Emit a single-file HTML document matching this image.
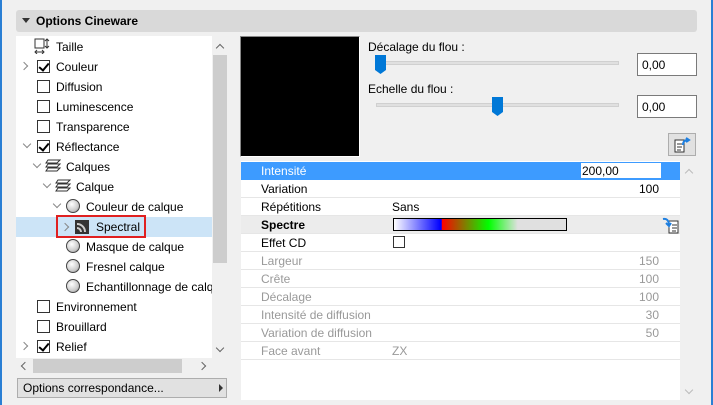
<!DOCTYPE html>
<html><head><meta charset="utf-8"><style>
*{margin:0;padding:0;box-sizing:border-box}
body{width:713px;height:405px;background:#f0f0f0;position:relative;overflow:hidden;font-family:"Liberation Sans",sans-serif;font-size:12px;color:#000}
.a{position:absolute}
.t{position:absolute;white-space:nowrap;line-height:22px}
.cb{position:absolute;width:13px;height:13px;border:1px solid #333;background:#fff}
.cb.on::after{content:"";position:absolute;left:3px;top:0px;width:4px;height:8px;border:solid #000;border-width:0 2px 2px 0;transform:rotate(40deg)}
.chev{position:absolute;width:6px;height:6px;border:solid #888;border-width:0 1.5px 1.5px 0}
.down{transform:rotate(45deg)}
.right{transform:rotate(-45deg)}
.ball{position:absolute;width:14px;height:14px;border-radius:50%;border:1px solid #444;background:radial-gradient(circle at 40% 35%,#fff,#ccc 60%,#888)}
.row{position:absolute;left:241px;width:439px;height:18px;border-bottom:1px solid #e6e6e6;background:#fff;line-height:19px}
.row span{position:absolute}
.g{color:#999}
</style></head><body>
<div class="a" style="left:0;top:0;width:2px;height:405px;background:#2a7fd4"></div>
<div class="a" style="left:711px;top:0;width:2px;height:405px;background:#2a7fd4"></div>
<div class="a" style="left:16px;top:10px;width:681px;height:22px;background:#d9d9d9;border-radius:3px"></div>
<div class="a" style="left:22px;top:18px;border-left:4px solid transparent;border-right:4px solid transparent;border-top:5px solid #333"></div>
<div class="t" style="left:36px;top:10px;line-height:22px;font-weight:bold">Options Cineware</div>

<!-- tree -->
<div class="a" style="left:16px;top:36px;width:196px;height:322px;background:#fff;overflow:hidden">
 <svg class="a" style="left:18px;top:2px" width="16" height="16"><rect x="1" y="1" width="9" height="9" fill="none" stroke="#333"/><path d="M13 1v9M11 3l2-2 2 2M11 8l2 2 2-2M1 14h9M3 12l-2 2 2 2M8 12l2 2-2 2" stroke="#333" fill="none"/></svg>
 <div class="t" style="left:40px;top:0">Taille</div>
 <div class="chev right" style="left:5px;top:27px"></div><div class="cb on" style="left:21px;top:24px"></div><div class="t" style="left:40px;top:20px">Couleur</div>
 <div class="cb" style="left:21px;top:44px"></div><div class="t" style="left:40px;top:40px">Diffusion</div>
 <div class="cb" style="left:21px;top:64px"></div><div class="t" style="left:40px;top:60px">Luminescence</div>
 <div class="cb" style="left:21px;top:84px"></div><div class="t" style="left:40px;top:80px">Transparence</div>
 <div class="chev down" style="left:8px;top:105px"></div><div class="cb on" style="left:21px;top:104px"></div><div class="t" style="left:40px;top:100px">Réflectance</div>
 <div class="chev down" style="left:18px;top:125px"></div>
 <svg class="a" style="left:29px;top:123px" width="16" height="14"><path d="M3 1h12l-3 3H1zM3 5h12l-3 3H1zM3 9h12l-3 3H1z" fill="none" stroke="#333"/></svg>
 <div class="t" style="left:50px;top:120px">Calques</div>
 <div class="chev down" style="left:28px;top:145px"></div>
 <svg class="a" style="left:39px;top:143px" width="16" height="14"><path d="M3 1h12l-3 3H1zM3 5h12l-3 3H1zM3 9h12l-3 3H1z" fill="none" stroke="#333"/></svg>
 <div class="t" style="left:60px;top:140px">Calque</div>
 <div class="chev down" style="left:38px;top:165px"></div><div class="ball" style="left:50px;top:163px"></div><div class="t" style="left:70px;top:160px">Couleur de calque</div>
 <div class="a" style="left:0;top:181px;width:196px;height:20px;background:#cce4f7"></div>
 <div class="a" style="left:40px;top:179px;width:90px;height:23px;border:2px solid #e02020"></div>
 <div class="chev right" style="left:46px;top:188px"></div>
 <svg class="a" style="left:59px;top:184px" width="14" height="14"><rect width="14" height="14" fill="#333"/><path d="M2 4a8 8 0 0 1 8 8M2 8a4 4 0 0 1 4 4" stroke="#ccc" stroke-width="2" fill="none"/></svg>
 <div class="t" style="left:80px;top:180px">Spectral</div>
 <div class="ball" style="left:50px;top:203px"></div><div class="t" style="left:70px;top:200px">Masque de calque</div>
 <div class="ball" style="left:50px;top:223px"></div><div class="t" style="left:70px;top:220px">Fresnel calque</div>
 <div class="ball" style="left:50px;top:243px"></div><div class="t" style="left:70px;top:240px">Echantillonnage de calque</div>
 <div class="cb" style="left:21px;top:264px"></div><div class="t" style="left:40px;top:260px">Environnement</div>
 <div class="cb" style="left:21px;top:284px"></div><div class="t" style="left:40px;top:280px">Brouillard</div>
 <div class="chev right" style="left:5px;top:307px"></div><div class="cb on" style="left:21px;top:304px"></div><div class="t" style="left:40px;top:300px">Relief</div>
</div>
<div class="a" style="left:212px;top:36px;width:16px;height:322px;background:#f0f0f0"></div>
<div class="a" style="left:213px;top:55px;width:14px;height:208px;background:#cdcdcd"></div>
<div class="chev" style="left:217px;top:45px;transform:rotate(-135deg);border-color:#666"></div>
<div class="chev down" style="left:217px;top:345px;border-color:#666"></div>
<div class="a" style="left:16px;top:358px;width:212px;height:16px;background:#f0f0f0"></div>
<div class="a" style="left:33px;top:359px;width:149px;height:14px;background:#cdcdcd"></div>
<div class="chev" style="left:22px;top:363px;transform:rotate(135deg);border-color:#666"></div>
<div class="chev right" style="left:199px;top:363px;border-color:#666"></div>
<div class="a" style="left:17px;top:378px;width:210px;height:20px;background:#e1e1e1;border:1px solid #adadad"></div>
<div class="t" style="left:23px;top:378px;line-height:20px">Options correspondance...</div>
<div class="a" style="left:219px;top:384px;border-top:4px solid transparent;border-bottom:4px solid transparent;border-left:4px solid #333"></div>

<!-- right -->
<div class="a" style="left:240px;top:36px;width:120px;height:121px;background:#000;border:1px solid #888;border-right-color:#fff;border-bottom-color:#fff"></div>
<div class="t" style="left:368px;top:36px">Décalage du flou :</div>
<div class="a" style="left:376px;top:61px;width:243px;height:4px;background:#e0e0e0;border:1px solid #d0d0d0"></div>
<svg class="a" style="left:375px;top:55px" width="12" height="20"><path d="M0 0h11v15l-5.5 4L0 15z" fill="#0078d7"/></svg>
<div class="a" style="left:637px;top:53px;width:60px;height:23px;background:#fff;border:1px solid #7a7a7a"></div>
<div class="t" style="left:642px;top:55px;line-height:20px">0,00</div>
<div class="t" style="left:368px;top:78px">Echelle du flou :</div>
<div class="a" style="left:376px;top:103px;width:243px;height:4px;background:#e0e0e0;border:1px solid #d0d0d0"></div>
<svg class="a" style="left:492px;top:97px" width="12" height="20"><path d="M0 0h11v15l-5.5 4L0 15z" fill="#0078d7"/></svg>
<div class="a" style="left:637px;top:95px;width:60px;height:23px;background:#fff;border:1px solid #7a7a7a"></div>
<div class="t" style="left:642px;top:97px;line-height:20px">0,00</div>
<div class="a" style="left:668px;top:133px;width:28px;height:23px;background:#e1e1e1;border:1px solid #adadad"></div>
<svg class="a" style="left:673px;top:136px" width="20" height="18"><path d="M2 4h9v12H2z" fill="#fff" stroke="#333"/><path d="M4 8h5M4 11h5M4 14h4" stroke="#333"/><path d="M10 9q0-5 5-5M13 2l3 2-3 2" stroke="#1e7fe0" stroke-width="2" fill="none"/></svg>

<div class="a" style="left:241px;top:161px;width:439px;height:239px;background:#fff"></div>
<div class="row" style="top:162px;background:#3d9bff;color:#fff;border:none"><span style="left:20px">Intensité</span></div>
<div class="a" style="left:581px;top:163px;width:80px;height:15px;background:#fff;line-height:17px;padding-left:1px">200,00</div>
<div class="row" style="top:180px"><span style="left:20px">Variation</span><span style="right:21px">100</span></div>
<div class="row" style="top:198px"><span style="left:20px">Répétitions</span><span style="left:151px">Sans</span></div>
<div class="row" style="top:216px;background:#ececec"><span style="left:20px;font-weight:bold">Spectre</span></div>
<div class="a" style="left:393px;top:218px;width:174px;height:13px;border:1px solid #000;background:linear-gradient(90deg,#fff 0%,#0000ff 27%,#0000ff 27.5%,#ff0000 28%,#00ff00 55%,#e0e0e0 72%,#e0e0e0 100%)"></div>
<svg class="a" style="left:662px;top:216px" width="18" height="18"><path d="M7 5h9v12H7z" fill="#fff" stroke="#333"/><path d="M10 9h5M10 12h5M10 15h4" stroke="#333"/><path d="M1 3q5-1 6 5M4 7l3 3 2-3" stroke="#1e7fe0" stroke-width="2" fill="none"/></svg>
<div class="row" style="top:234px"><span style="left:20px">Effet CD</span></div>
<div class="cb" style="left:393px;top:236px;width:12px;height:12px"></div>
<div class="row g" style="top:252px"><span style="left:20px">Largeur</span><span style="right:21px">150</span></div>
<div class="row g" style="top:270px"><span style="left:20px">Crête</span><span style="right:21px">100</span></div>
<div class="row g" style="top:288px"><span style="left:20px">Décalage</span><span style="right:21px">100</span></div>
<div class="row g" style="top:306px"><span style="left:20px">Intensité de diffusion</span><span style="right:21px">30</span></div>
<div class="row g" style="top:324px"><span style="left:20px">Variation de diffusion</span><span style="right:21px">50</span></div>
<div class="row g" style="top:342px"><span style="left:20px">Face avant</span><span style="left:151px">ZX</span></div>
<div class="a" style="left:680px;top:161px;width:17px;height:239px;background:#f0f0f0"></div>
<div class="chev" style="left:686px;top:170px;transform:rotate(-135deg);border-color:#bbb"></div>
<div class="chev down" style="left:686px;top:387px;border-color:#bbb"></div>
</body></html>
